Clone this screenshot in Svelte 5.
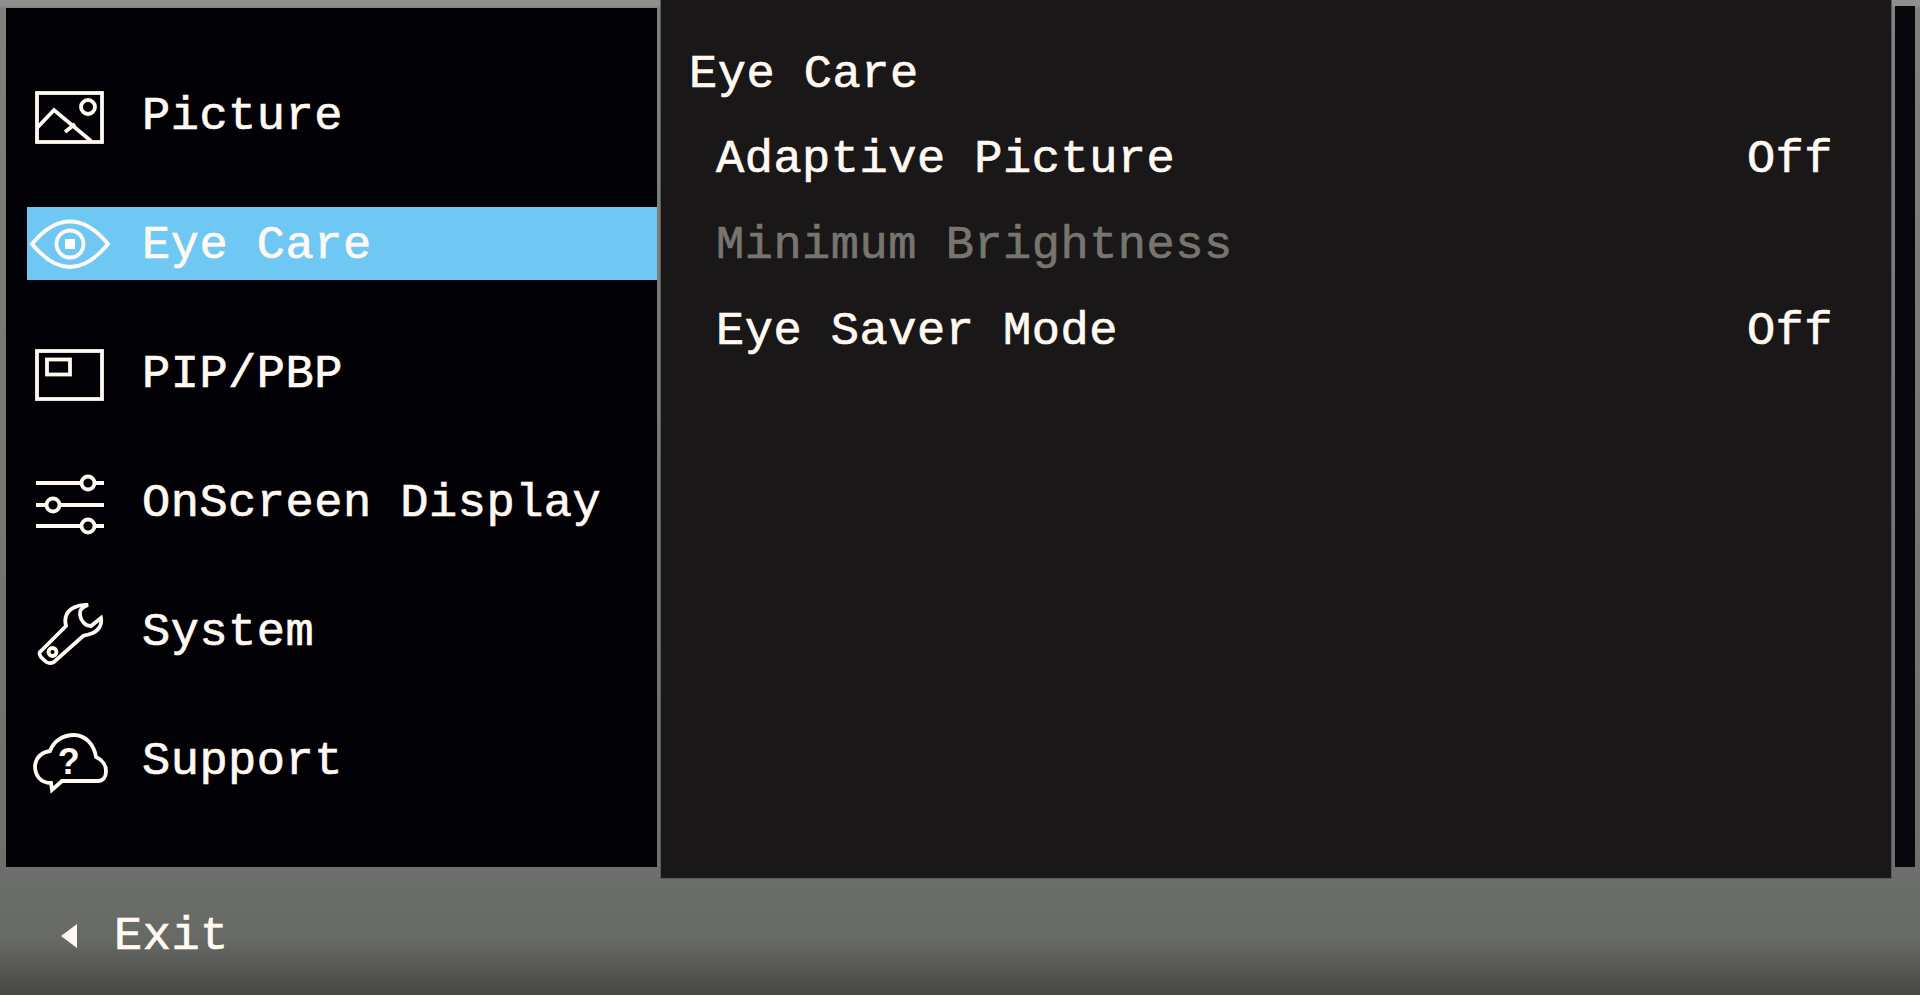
<script lang="ts">
  const settings = [
    { name: 'Adaptive Picture', value: 'Off' },
    { name: 'Minimum Brightness', value: '', disabled: true },
    { name: 'Eye Saver Mode', value: 'Off' }
  ];
</script>

<div class="osd">
  <div class="left">
    <nav class="menu">
      <div class="item">
        <svg viewBox="0 0 84 72" width="84" height="72">
          <rect x="9" y="14" width="65" height="49" />
          <path d="M9 49 L26 31 L63 62 M37 53 L47 45" />
          <circle cx="60" cy="28" r="7" />
        </svg>
        <span>Picture</span>
      </div>
      <div class="item active">
        <svg viewBox="0 0 84 72" width="84" height="72">
          <path d="M4 36 C18 19 30 13.5 42 13.5 C54 13.5 66 19 80 36 C66 53 54 59 42 59 C30 59 18 53 4 36 Z" />
          <circle cx="42" cy="36" r="13.5" />
          <rect class="solid" x="37" y="31" width="10" height="10" />
        </svg>
        <span>Eye Care</span>
      </div>
      <div class="item">
        <svg viewBox="0 0 84 72" width="84" height="72">
          <rect x="9" y="14" width="65" height="48" />
          <rect x="19" y="22.5" width="23" height="15" />
        </svg>
        <span>PIP/PBP</span>
      </div>
      <div class="item">
        <svg viewBox="0 0 84 72" width="84" height="72">
          <path d="M8 17 H76 M8 39 H76 M8 60 H76" />
          <circle class="knob" cx="60" cy="17" r="6.5" />
          <circle class="knob" cx="25" cy="39" r="6.5" />
          <circle class="knob" cx="60" cy="60" r="6.5" />
        </svg>
        <span>OnScreen Display</span>
      </div>
      <div class="item">
        <svg viewBox="0 0 84 72" width="84" height="72">
          <path d="M60 10 C54 12 51 15 52 20 C53 26 57 31 63 31 L73 23 C74.5 30 70 37 62 39 C60 40 57 40 55 41 L26 67 C22 69 19 68 17 66 L13 62 C11 59 11 57 13 56 L38 31 C37 27 37 24 38 21 C40 14 50 9 60 10 Z" />
          <circle cx="24.5" cy="57" r="4" />
        </svg>
        <span>System</span>
      </div>
      <div class="item">
        <svg viewBox="0 0 84 72" width="84" height="72">
          <path d="M22 27 C26 16 36 11 46 11 C57 11 66 20 68 33 C75 36 78 42 78 47 C78 53 75 57 70 57 L34 57 L24 66 L23 59 C12 59 7 51 7 42 C8 33 14 28 22 27 Z" />
          <text x="41" y="50" text-anchor="middle">?</text>
        </svg>
        <span>Support</span>
      </div>
    </nav>
    <div class="exit">
      <svg viewBox="0 0 16 24" width="16" height="24"><path d="M16 0 V24 L0 12 Z" /></svg>
      <span>Exit</span>
    </div>
  </div>

  <main class="detail">
    <h2>Eye Care</h2>
    {#each settings as row}
      <div class="row" class:disabled={row.disabled}>
        <span>{row.name}</span>
        <span>{row.value}</span>
      </div>
    {/each}
  </main>

  <div class="strip"></div>
</div>

<style>
  :global(body) {
    margin: 0;
    background: #6b6d69;
  }

  .osd {
    display: flex;
    align-items: flex-start;
    width: 1920px;
    height: 995px;
    overflow: hidden;
    font-family: "Liberation Mono", monospace;
    font-size: 47px;
    letter-spacing: 0.5px;
    -webkit-text-stroke: 0.7px #fff9f2;
    color: #fff9f2;
    background:
      linear-gradient(180deg, #8f8f8d 0, #8f8f8d 6px, rgba(0, 0, 0, 0) 8px),
      linear-gradient(180deg, #7d827f 0, #6d706c 860px, #676965 940px, #474845 995px);
  }

  .left {
    width: 651px;
    margin: 8px 0 0 6px;
  }

  .menu {
    display: flex;
    flex-direction: column;
    gap: 56px;
    height: 859px;
    box-sizing: border-box;
    padding: 70px 0 0 21px;
    background: #020206;
  }

  .item {
    display: flex;
    align-items: center;
    gap: 30px;
    height: 73px;
    padding-left: 1px;
  }

  .item span {
    padding-top: 4px;
  }

  .item.active {
    background: #6fc8f4;
  }

  svg {
    flex: none;
  }

  svg :global(*) {
    fill: none;
    stroke: #fff9f2;
    stroke-width: 3.8;
  }

  .item svg .solid {
    fill: #fff;
    stroke: none;
  }

  .item svg .knob {
    fill: #020206;
  }

  .item svg text {
    fill: #fff9f2;
    stroke: none;
    font-family: "Liberation Sans", sans-serif;
    font-weight: bold;
    font-size: 36px;
  }

  .exit {
    display: flex;
    align-items: center;
    gap: 37px;
    height: 72px;
    margin-top: 33px;
    padding-left: 55px;
  }

  .exit svg path {
    fill: #fff9f2;
    stroke: none;
  }

  .detail {
    width: 1232px;
    height: 879px;
    box-sizing: border-box;
    margin-left: 3px;
    padding: 39px 28px 0 28px;
    background: #191718;
    border: 1px solid #5a5a58;
    border-top: 0;
  }

  h2 {
    height: 72px;
    margin: 0 0 13px;
    font: inherit;
    line-height: 72px;
  }

  .row {
    display: flex;
    justify-content: space-between;
    height: 72px;
    margin-bottom: 14px;
    padding: 0 30px 0 27px;
    line-height: 72px;
  }

  .row.disabled {
    color: #77756f;
    -webkit-text-stroke: 0.7px #77756f;
  }

  .strip {
    width: 20px;
    height: 861px;
    margin: 6px 0 0 3px;
    background: #08080c;
  }
</style>
